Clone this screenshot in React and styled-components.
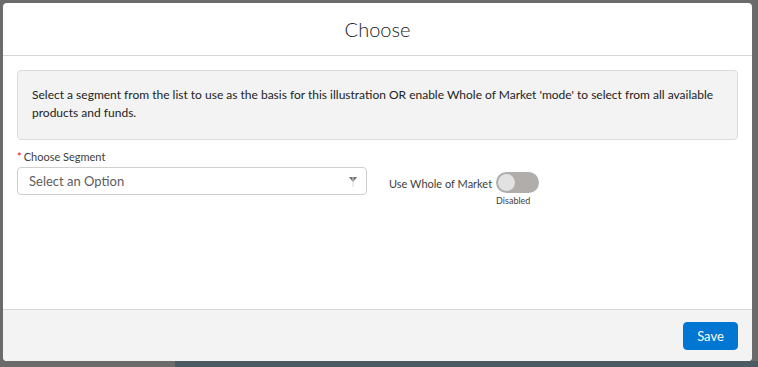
import React, { useState } from "react";
import styled, { createGlobalStyle } from "styled-components";

const GlobalStyle = createGlobalStyle`
  html, body {
    margin: 0;
    padding: 0;
    background: #6b6b6b;
    font-family: "Lato", "Noto Sans", sans-serif;
    color: #181818;
  }
`;

const Backdrop = styled.div`
  width: 758px;
  height: 367px;
  padding: 3px 6px 6px 3px;
  box-sizing: border-box;
  position: relative;
  overflow: hidden;
`;

const Behind = styled.div`
  position: absolute;
  left: 175px;
  right: 0;
  bottom: 0;
  height: 6px;
  background: #4b5a63;
`;

const Modal = styled.section`
  position: relative;
  height: 100%;
  background: #fff;
  border-radius: 4px;
  display: flex;
  flex-direction: column;
  overflow: hidden;
`;

const Header = styled.header`
  height: 52px;
  border-bottom: 1px solid #d8d8d8;
  display: flex;
  align-items: center;
  justify-content: center;
  flex-shrink: 0;
`;

const Title = styled.h2`
  margin: 0;
  font-size: 20px;
  font-weight: 300;
  color: #222;
`;

const Body = styled.div`
  flex: 1;
  padding: 14px 14px 0 14px;
`;

const InfoBox = styled.div`
  background: #f3f3f3;
  border: 1px solid #dcdcdc;
  border-radius: 4px;
  padding: 15px 14px 17px;
  font-size: 12px;
  line-height: 18px;
  color: #222;
`;

const FormRow = styled.div`
  display: flex;
  align-items: flex-start;
  margin-top: 9px;
`;

const Field = styled.div`
  width: 350px;
`;

const Label = styled.label`
  display: block;
  font-size: 11px;
  color: #3e3e3c;
  margin-bottom: 2px;
  line-height: 16px;
`;

const Required = styled.abbr`
  color: #ea001e;
  text-decoration: none;
  margin-right: 2px;
`;

const SelectBox = styled.div`
  height: 28px;
  border: 1px solid #d0d0d0;
  border-radius: 4px;
  display: flex;
  align-items: center;
  justify-content: space-between;
  padding: 0 8px 0 11px;
  box-sizing: border-box;
  font-size: 13px;
  color: #5c5c5c;
`;

const ToggleGroup = styled.div`
  display: flex;
  align-items: flex-start;
  margin-left: 22px;
  margin-top: 23px;
`;

const ToggleLabel = styled.span`
  font-size: 11px;
  color: #3e3e3c;
  margin-top: 5px;
  margin-right: 4px;
`;

const ToggleCol = styled.div`
  display: flex;
  flex-direction: column;
  align-items: flex-start;
`;

const Track = styled.button`
  width: 43px;
  height: 21px;
  border-radius: 11px;
  border: none;
  padding: 0;
  background: ${(p) => (p.on ? "#0176d3" : "#b0adab")};
  position: relative;
  cursor: pointer;
`;

const Knob = styled.span`
  position: absolute;
  top: 2px;
  left: ${(p) => (p.on ? "24px" : "2px")};
  width: 17px;
  height: 17px;
  border-radius: 50%;
  background: #e2e2e2;
`;

const StateText = styled.span`
  font-size: 9px;
  color: #3e3e3c;
  margin-top: 2px;
`;

const Footer = styled.footer`
  height: 51px;
  background: #f3f3f3;
  border-top: 1px solid #d8d8d8;
  display: flex;
  align-items: center;
  justify-content: flex-end;
  padding: 0 14px;
  flex-shrink: 0;
`;

const SaveButton = styled.button`
  width: 55px;
  height: 28px;
  background: #0176d3;
  color: #fff;
  border: 1px solid #0176d3;
  border-radius: 4px;
  font-family: inherit;
  font-size: 13px;
  cursor: pointer;
`;

const Arrow = () => (
  <svg width="10" height="14" viewBox="0 0 10 14">
    <path d="M1 3 L9 3 L5 8 Z" fill="#706e6b" />
    <path d="M5 3 L5 13" stroke="#d8d8d8" strokeWidth="1" />
  </svg>
);

export default function App() {
  const [wom, setWom] = useState(false);
  return (
    <>
      <GlobalStyle />
      <Backdrop>
        <Modal>
          <Header>
            <Title>Choose</Title>
          </Header>
          <Body>
            <InfoBox>
              Select a segment from the list to use as the basis for this illustration OR enable Whole of Market 'mode' to select from all available products and funds.
            </InfoBox>
            <FormRow>
              <Field>
                <Label>
                  <Required title="required">*</Required>Choose Segment
                </Label>
                <SelectBox>
                  <span>Select an Option</span>
                  <Arrow />
                </SelectBox>
              </Field>
              <ToggleGroup>
                <ToggleLabel>Use Whole of Market</ToggleLabel>
                <ToggleCol>
                  <Track on={wom ? 1 : 0} onClick={() => setWom(!wom)}>
                    <Knob on={wom ? 1 : 0} />
                  </Track>
                  <StateText>{wom ? "Enabled" : "Disabled"}</StateText>
                </ToggleCol>
              </ToggleGroup>
            </FormRow>
          </Body>
          <Footer>
            <SaveButton>Save</SaveButton>
          </Footer>
        </Modal>
        <Behind />
      </Backdrop>
    </>
  );
}
